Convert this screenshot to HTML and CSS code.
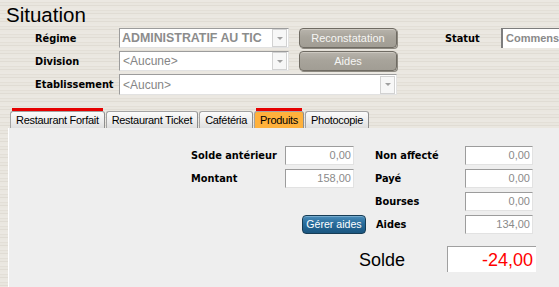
FILE: index.html
```html
<!DOCTYPE html>
<html lang="fr">
<head>
<meta charset="utf-8">
<title>Situation</title>
<link rel="stylesheet" href="styles.css">
</head>
<body>
<div class="app">
  <h1 class="title">Situation</h1>

  <div class="form">
    <span class="lbl r1 c1">Régime</span>
    <div class="combo r1 c2"><span class="combo-text strong">ADMINISTRATIF AU TIC</span><span class="drop"><i class="tri"></i></span></div>
    <button class="gbtn r1 c4">Reconstatation</button>
    <span class="lbl r1 c6">Statut</span>
    <div class="field r1 c7">Commens</div>

    <span class="lbl r2 c1">Division</span>
    <div class="combo r2 c2"><span class="combo-text">&lt;Aucune&gt;</span><span class="drop"><i class="tri"></i></span></div>
    <button class="gbtn r2 c4">Aides</button>

    <span class="lbl r3 c1">Etablissement</span>
    <div class="combo r3 wide"><span class="combo-text">&lt;Aucun&gt;</span><span class="drop"><i class="tri"></i></span></div>
  </div>

  <div class="tabs">
    <div class="tab marked">Restaurant Forfait</div>
    <div class="tab">Restaurant Ticket</div>
    <div class="tab">Cafétéria</div>
    <div class="tab active marked">Produits</div>
    <div class="tab">Photocopie</div>
  </div>

  <div class="panel">
    <div class="grid">
      <span class="plbl">Solde antérieur</span>
      <div class="num">0,00</div>
      <span></span>
      <span class="plbl">Non affecté</span>
      <div class="num">0,00</div>

      <span class="plbl">Montant</span>
      <div class="num">158,00</div>
      <span></span>
      <span class="plbl">Payé</span>
      <div class="num">0,00</div>

      <span></span>
      <span></span>
      <span></span>
      <span class="plbl">Bourses</span>
      <div class="num">0,00</div>

      <span></span>
      <button class="bbtn">Gérer aides</button>
      <span class="plbl aides">Aides</span>
      <div class="num">134,00</div>
    </div>

    <div class="solde-row">
      <span class="solde-lbl">Solde</span>
      <div class="solde-val">-24,00</div>
    </div>
  </div>
</div>
</body>
</html>
```

FILE: styles.css
```css
html, body {
  margin: 0;
  padding: 0;
  height: 100%;
  overflow: hidden;
}

body {
  background: repeating-linear-gradient(180deg,
    #ebe8e2 0px, #ebe8e2 2px,
    #e3dfd7 2px, #e3dfd7 3px,
    #e9e6df 3px, #e9e6df 5px,
    #e0dcd4 5px, #e0dcd4 6px,
    #eae7e0 6px, #eae7e0 8px);
  font-family: "Liberation Sans", Arial, sans-serif;
  color: #000;
}

.app {
  display: flex;
  flex-direction: column;
  height: 100%;
}

.title {
  margin: 3px 0 1px 6px;
  font-size: 20.5px;
  font-weight: normal;
  line-height: 24px;
  height: 24px;
}

/* top form */
.form {
  display: grid;
  grid-template-columns: 84px 170px 10px 98px 48px 56px 58px;
  grid-template-rows: 20px 20px 21px;
  row-gap: 3px;
  padding-left: 35px;
}

.r1 { grid-row: 1; }
.r2 { grid-row: 2; }
.r3 { grid-row: 3; }
.c1 { grid-column: 1; }
.c2 { grid-column: 2; }
.c4 { grid-column: 4; }
.c6 { grid-column: 6; }
.c7 { grid-column: 7; }
.wide { grid-column: 2 / 5; }

.lbl {
  font-family: "DejaVu Sans", Verdana, sans-serif;
  font-weight: bold;
  font-size: 9.8px;
  align-self: center;
  white-space: nowrap;
}

.combo {
  display: flex;
  align-items: center;
  background: #fff;
  border: 1px solid #9c9c9c;
  border-right-color: #e2e2e2;
  border-bottom-color: #e2e2e2;
  box-sizing: border-box;
  overflow: hidden;
}

.combo-text {
  flex: 1;
  padding-left: 3px;
  font-size: 12px;
  color: #858585;
  white-space: nowrap;
  overflow: hidden;
}

.combo-text.strong {
  padding-left: 2px;
  font-weight: bold;
  font-size: 12.4px;
  color: #8c8c8c;
}

.drop {
  width: 13px;
  height: 16px;
  margin-right: 1px;
  border: 1px solid #d2d2d2;
  background: #f7f7f7;
  display: flex;
  align-items: center;
  justify-content: center;
}

.tri {
  width: 0;
  height: 0;
  border-left: 3px solid transparent;
  border-right: 3px solid transparent;
  border-top: 3px solid #a0a0a0;
}

.gbtn {
  margin: 0;
  padding: 0;
  height: 20px;
  border: 1px solid #6f6b63;
  border-radius: 4px;
  background: linear-gradient(180deg, #b8b4ac 0%, #a8a49b 45%, #a19d94 100%);
  box-shadow: inset 0 1px 0 #cdc9c1, 1px 1px 0 #8d8980;
  color: #f6f6f4;
  font-family: "Liberation Sans", Arial, sans-serif;
  font-size: 11px;
  line-height: 18px;
}

.field {
  height: 20px;
  box-sizing: border-box;
  background: #fff;
  border-top: 1px solid #7d7d7d;
  border-left: 2px solid #7d7d7d;
  padding-left: 3px;
  font-weight: bold;
  font-size: 11px;
  line-height: 18px;
  color: #8a8a8a;
  white-space: nowrap;
  overflow: hidden;
}

/* tabs */
.tabs {
  display: flex;
  gap: 1px;
  margin-top: 12px;
  padding-top: 4px;
  padding-left: 10px;
}

.tab {
  position: relative;
  height: 17px;
  box-sizing: border-box;
  padding: 1px 5px 0;
  border: 1px solid #a3a3a3;
  border-bottom: none;
  border-right-color: #8e8e8e;
  border-radius: 3px 3px 0 0;
  background: linear-gradient(180deg, #fbfbfb 0%, #ececec 60%, #dedede 100%);
  font-size: 11px;
  letter-spacing: -0.3px;
  line-height: 15px;
  white-space: nowrap;
}

.tab.active {
  background: #ffb13c;
}

.tab.marked::before {
  content: "";
  position: absolute;
  left: 1px;
  right: 1px;
  top: -4px;
  height: 3px;
  background: #e50000;
}

/* panel */
.panel {
  flex: 1;
  margin-left: 8px;
  background: #eeeeee;
  border-left: 1px solid #ffffff;
  padding: 18px 0 0 182px;
}

.grid {
  display: grid;
  grid-template-columns: 94px 69px 21px 90px 68px;
  grid-template-rows: repeat(4, 19px);
  row-gap: 4px;
}

.plbl {
  font-family: "DejaVu Sans", Verdana, sans-serif;
  font-weight: bold;
  font-size: 9.8px;
  align-self: center;
  white-space: nowrap;
}

.plbl.aides {
  padding-left: 1px;
}

.num {
  box-sizing: border-box;
  height: 19px;
  background: #fff;
  border: 1px solid #9c9c9c;
  border-right-color: #e2e2e2;
  border-bottom-color: #e2e2e2;
  padding-right: 2px;
  text-align: right;
  font-size: 11px;
  line-height: 17px;
  color: #8a8a8a;
}

.bbtn {
  grid-column: 2 / 4;
  justify-self: start;
  margin: 0 0 0 17px;
  padding: 0;
  width: 64px;
  height: 19px;
  border: 1px solid #163c55;
  border-radius: 4px;
  background: linear-gradient(180deg, #4a8cb9 0%, #276c9b 45%, #1b5680 100%);
  box-shadow: inset 0 1px 0 #74a9cc;
  color: #ffffff;
  font-family: "Liberation Sans", Arial, sans-serif;
  font-size: 10.6px;
  line-height: 17px;
}

.solde-row {
  display: flex;
  align-items: center;
  margin-top: 12px;
  padding-left: 168px;
}

.solde-lbl {
  width: 88px;
  font-size: 18px;
  padding-top: 3px;
}

.solde-val {
  box-sizing: border-box;
  width: 89px;
  height: 26px;
  background: #fff;
  border-top: 1px solid #a0a0a0;
  border-left: 1px solid #a0a0a0;
  padding-right: 3px;
  text-align: right;
  font-size: 18px;
  line-height: 26px;
  color: #ff0000;
}
```
